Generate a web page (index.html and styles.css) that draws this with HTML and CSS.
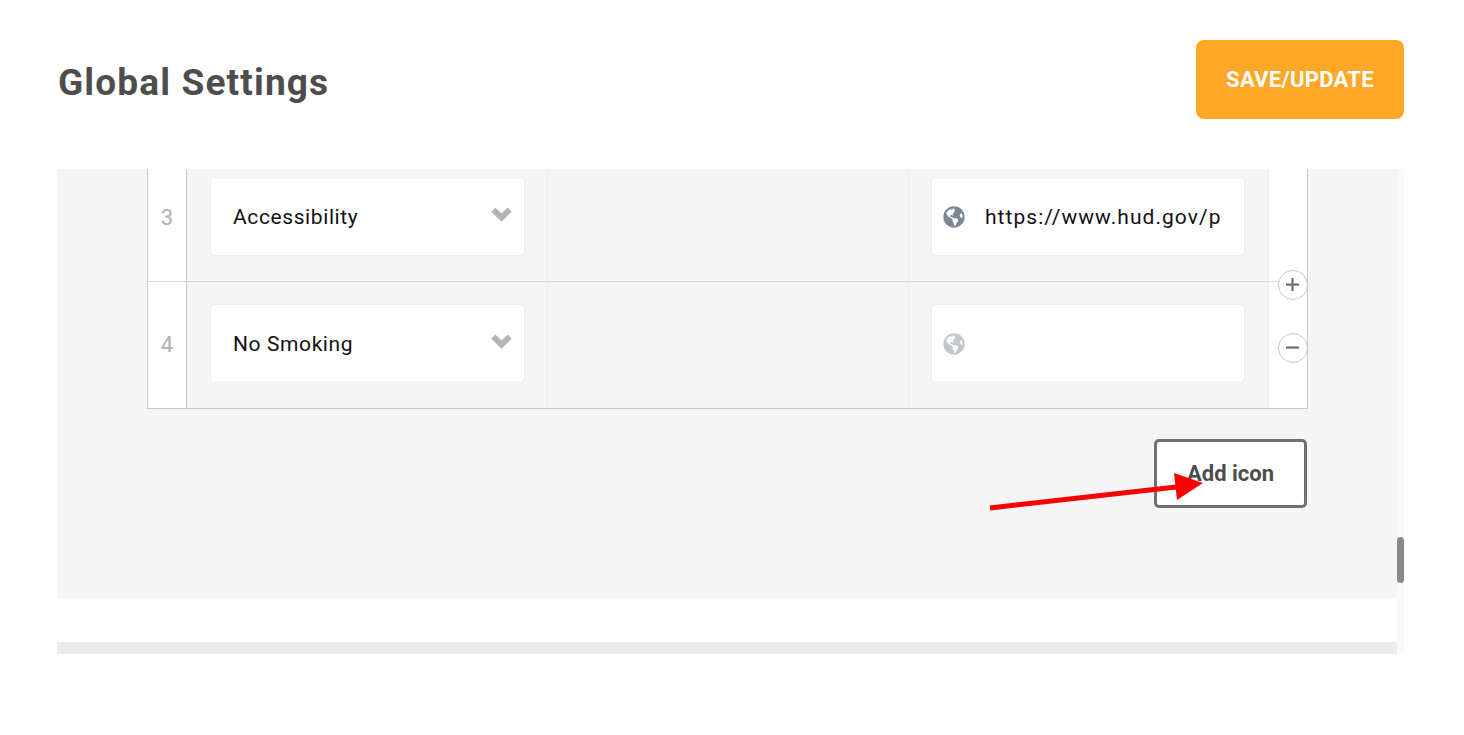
FILE: index.html
```html
<!DOCTYPE html>
<html lang="en">
<head>
    <meta charset="UTF-8">
    <meta name="viewport" content="width=device-width, initial-scale=1.0">
    <title>Global Settings</title>
    <link rel="stylesheet" href="styles.css">
</head>
<body>

<svg width="0" height="0" class="defs">
    <symbol id="globe" viewBox="0 0 496 512">
        <path d="M248 8C111.03 8 0 119.03 0 256s111.03 248 248 248 248-111.03 248-248S384.97 8 248 8zm82.29 357.6c-3.9 3.88-7.99 7.95-11.31 11.28-2.99 3-5.1 6.7-6.17 10.71-1.51 5.66-2.73 11.38-4.77 16.87l-17.39 46.85c-13.76 3-28 4.69-42.65 4.69v-27.38c1.69-12.62-7.64-36.26-22.63-51.25-6-6-9.37-14.14-9.37-22.63v-32.01c0-11.64-6.27-22.34-16.46-27.97-14.37-7.95-34.81-19.06-48.81-26.11-11.48-5.78-22.1-13.14-31.65-21.75l-.8-.72a114.792 114.792 0 0 1-18.06-20.74c-9.38-13.77-24.66-36.42-34.59-51.14 20.47-45.5 57.36-82.04 103.2-101.89l24.01 12.01C203.48 89.74 216 82.01 216 70.11v-11.3c7.99-1.29 16.12-2.11 24.39-2.42l28.3 28.3c6.25 6.25 6.25 16.38 0 22.63L264 112l-10.34 10.34c-3.12 3.12-3.12 8.19 0 11.31l4.69 4.69c3.12 3.12 3.12 8.19 0 11.31l-8 8a8.008 8.008 0 0 1-5.66 2.34h-8.99c-2.08 0-4.08.81-5.58 2.27l-9.92 9.65a8.008 8.008 0 0 0-1.58 9.31l15.59 31.19c2.66 5.32-1.21 11.58-7.15 11.58h-5.64c-1.93 0-3.79-.7-5.24-1.96l-9.28-8.06a16.017 16.017 0 0 0-15.55-3.1l-31.17 10.39a11.95 11.95 0 0 0-8.17 11.34c0 4.53 2.56 8.66 6.61 10.69l11.08 5.54c9.41 4.71 19.79 7.16 30.31 7.16s22.59 27.29 32 32h66.75c8.49 0 16.62 3.37 22.63 9.37l13.69 13.69a30.503 30.503 0 0 1 8.93 21.57 46.536 46.536 0 0 1-13.72 32.98zM417 274.25c-5.79-1.45-10.84-5-14.15-9.97l-17.98-26.97a23.97 23.97 0 0 1 0-26.62l19.59-29.38c2.32-3.47 5.5-6.29 9.24-8.15l12.98-6.49C440.2 193.59 448 223.87 448 256c0 8.67-.74 17.16-1.82 25.54L417 274.25z"/>
    </symbol>
    <symbol id="chevron" viewBox="0 0 20 14">
        <path d="M2.2 2.4 L10 10 L17.8 2.4" fill="none" stroke="currentColor" stroke-width="5.5"/>
    </symbol>
</svg>

<div class="page">
    <header class="top-bar">
        <h1>Global Settings</h1>
        <button class="save-btn">SAVE/UPDATE</button>
    </header>

    <div class="scroll-area">
        <div class="scroll-content">
            <div class="panel">
                <div class="icon-table">
                    <div class="row row-first">
                        <div class="num">3</div>
                        <div class="cell">
                            <div class="picker">
                                <span>Accessibility</span>
                                <svg class="chevron"><use href="#chevron"/></svg>
                            </div>
                        </div>
                        <div class="cell"></div>
                        <div class="cell">
                            <div class="url-field">
                                <svg class="globe"><use href="#globe"/></svg>
                                <span>https://www.hud.gov/p</span>
                            </div>
                        </div>
                        <div class="actions"></div>
                    </div>
                    <div class="row row-last">
                        <div class="num">4</div>
                        <div class="cell">
                            <div class="picker">
                                <span>No Smoking</span>
                                <svg class="chevron"><use href="#chevron"/></svg>
                            </div>
                        </div>
                        <div class="cell"></div>
                        <div class="cell">
                            <div class="url-field">
                                <svg class="globe globe-empty"><use href="#globe"/></svg>
                            </div>
                        </div>
                        <div class="actions"></div>
                    </div>

                    <!-- add / remove row, sit on top of the row line -->
                    <button class="round-btn add-row" aria-label="Add row">
                        <svg viewBox="0 0 30 30"><path d="M7.5 14.5 H21.5 M14.5 7.5 V21.5"/></svg>
                    </button>
                    <button class="round-btn remove-row" aria-label="Remove row">
                        <svg viewBox="0 0 30 30"><path d="M7.5 14.5 H21.5"/></svg>
                    </button>
                </div>

                <div class="add-wrap">
                    <button class="add-icon-btn">Add icon</button>
                </div>
            </div>
            <div class="panel-gap"></div>
            <div class="panel-foot"></div>
        </div>
        <div class="scroll-track">
            <div class="scroll-thumb"></div>
        </div>
    </div>
</div>

<!-- annotation arrow drawn over the screenshot -->
<svg class="arrow" width="1464" height="735" viewBox="0 0 1464 735">
    <line x1="990" y1="508" x2="1185" y2="486" stroke="#ff0000" stroke-width="5"/>
    <polygon points="1174,473 1203,483 1177,500" fill="#ff0000"/>
</svg>

</body>
</html>
```

FILE: styles.css
```css
html, body {
    margin: 0;
    height: 735px;
    overflow: hidden;
    background: #fff;
}
body {
    font-family: 'Roboto', 'Liberation Sans', sans-serif;
    position: relative;
}
.defs {
    display: block;
    height: 0;
}
.page {
    padding: 40px 60px 0 57px;
}
.top-bar {
    display: flex;
    justify-content: space-between;
    align-items: flex-start;
    height: 79px;
    margin-bottom: 50px;
}
h1 {
    margin: 21px 0 0 1px;
    font-size: 37px;
    line-height: 44px;
    font-weight: 700;
    letter-spacing: 1.15px;
    color: #4d4d4d;
}
.save-btn {
    width: 208px;
    height: 79px;
    border: none;
    border-radius: 8px;
    background-color: #ffa726;
    color: #fff;
    font-family: inherit;
    font-size: 22px;
    font-weight: 700;
    letter-spacing: 0.3px;
    cursor: pointer;
}
.scroll-area {
    display: flex;
    height: 485px;
}
.scroll-content {
    width: 1340px;
}
.scroll-track {
    width: 7px;
    background: #f9f9fb;
    padding-top: 368px;
    box-sizing: border-box;
}
.scroll-thumb {
    height: 46px;
    border-radius: 4px;
    background: #8a8a8a;
}
.panel {
    height: 429px;
    background: #f5f5f5;
    padding-left: 90px;
    box-sizing: border-box;
}
.panel-gap {
    height: 44px;
    background: #fff;
}
.panel-foot {
    height: 12px;
    background: #ebebeb;
}
.icon-table {
    position: relative;
    width: 1161px;
    box-sizing: border-box;
    border-left: 1px solid #c8c8c8;
    border-right: 1px solid #c8c8c8;
    border-bottom: 1px solid #c8c8c8;
    overflow: hidden;
}
.row {
    display: grid;
    grid-template-columns: 39px 361px 361px 360px 38px;
}
.row-first {
    height: 113px;
    border-bottom: 1px solid #d8d8d8;
    box-sizing: border-box;
}
.row-last {
    height: 126px;
}
.num {
    background: #fff;
    border-right: 1px solid #c8c8c8;
    color: #b0b0b0;
    font-size: 22px;
    text-align: center;
    box-sizing: border-box;
}
.row-first .num {
    padding-top: 36px;
}
.row-last .num {
    padding-top: 50px;
}
.cell {
    border-right: 1px solid #ebebeb;
    box-sizing: border-box;
    padding-left: 23px;
}
.row-first .cell {
    padding-top: 8px;
}
.row-last .cell {
    padding-top: 22px;
}
.cell:nth-child(4) {
    padding-left: 22px;
}
.actions {
    background: #fff;
}
.picker, .url-field {
    display: flex;
    align-items: center;
    height: 79px;
    box-sizing: border-box;
    background: #fff;
    border: 1px solid #ececec;
    border-radius: 5px;
    font-size: 21px;
    color: #111;
}
.picker {
    width: 315px;
    justify-content: space-between;
    padding: 0 12px 0 22px;
    letter-spacing: 0.6px;
}
.url-field {
    width: 314px;
    padding-left: 11px;
    gap: 20px;
    letter-spacing: 1.05px;
}
.chevron {
    width: 21px;
    height: 15px;
    margin-bottom: 4px;
    color: #b4b4b4;
}
.globe {
    width: 22px;
    height: 22px;
    fill: #7b8794;
}
.globe-empty {
    fill: #c3c8ce;
}
.round-btn {
    position: absolute;
    left: 1130px;
    width: 30px;
    height: 30px;
    padding: 0;
    border: 1px solid #c5cbd2;
    border-radius: 50%;
    background: #fff;
    cursor: pointer;
}
.round-btn svg {
    display: block;
    fill: none;
    stroke: #66707c;
    stroke-width: 2.4;
}
.add-row {
    top: 101px;
}
.remove-row {
    top: 164px;
}
.add-wrap {
    display: flex;
    justify-content: flex-end;
    width: 1160px;
    margin-top: 30px;
}
.add-icon-btn {
    width: 153px;
    height: 69px;
    box-sizing: border-box;
    border: 3px solid #707070;
    border-radius: 5px;
    background: #fff;
    color: #4d4d4d;
    font-family: inherit;
    font-size: 22px;
    font-weight: 700;
    cursor: pointer;
}
.arrow {
    position: absolute;
    left: 0;
    top: 0;
    pointer-events: none;
}
```
